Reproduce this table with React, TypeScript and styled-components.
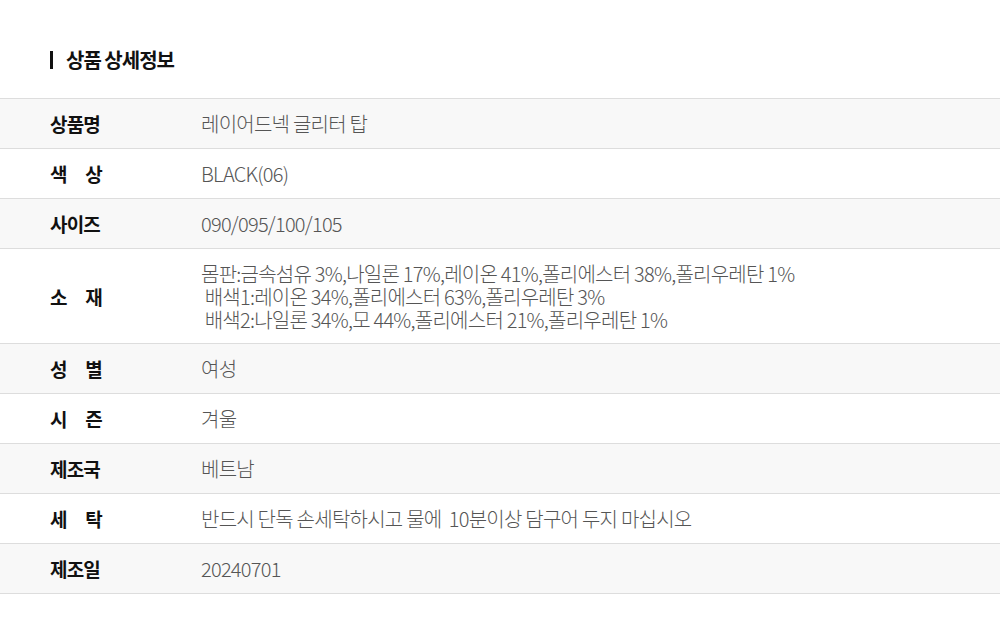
import styled, { createGlobalStyle } from "styled-components";

const GlobalStyle = createGlobalStyle`
    html, body {
        margin: 0;
        padding: 0;
        background: #ffffff;
    }
    body {
        font-family: "Noto Sans CJK KR", "Noto Sans", sans-serif;
        color: #222222;
    }
`;

const Wrap = styled.div`
    width: 1000px;
    padding-top: 48px;
`;

const Title = styled.h2`
    display: flex;
    align-items: center;
    gap: 13px;
    margin: 0 0 26px 50px;
    font-size: 20px;
    font-weight: 700;
    line-height: 24px;
    letter-spacing: -1px;
    color: #111111;
    &::before {
        content: "";
        width: 3px;
        height: 18px;
        background: #111111;
    }
`;

const Table = styled.div`
    border-top: 1px solid #dddddd;
`;

const Row = styled.div<{ $shade: boolean }>`
    display: grid;
    grid-template-columns: 201px 1fr;
    align-items: center;
    min-height: 49px;
    border-bottom: 1px solid #dddddd;
    background: ${({ $shade }) => ($shade ? "#f8f8f8" : "#ffffff")};
`;

const Label = styled.div<{ $spread: boolean }>`
    padding-left: 50px;
    font-size: 19px;
    font-weight: 700;
    letter-spacing: -0.8px;
    color: #111111;
    span {
        display: inline-block;
        width: ${({ $spread }) => ($spread ? "52px" : "auto")};
        text-align-last: ${({ $spread }) => ($spread ? "justify" : "auto")};
    }
`;

const Value = styled.div`
    padding: 12.5px 0;
    font-size: 20px;
    font-weight: 300;
    line-height: 23px;
    letter-spacing: -0.75px;
    color: #555555;
    white-space: pre-line;
`;

const rows = [
    { label: "상품명", value: "레이어드넥 글리터 탑" },
    { label: "색 상", value: "BLACK(06)" },
    { label: "사이즈", value: "090/095/100/105" },
    {
        label: "소 재",
        value:
            "몸판:금속섬유 3%,나일론 17%,레이온 41%,폴리에스터 38%,폴리우레탄 1%\n\u00a0배색1:레이온 34%,폴리에스터 63%,폴리우레탄 3%\n\u00a0배색2:나일론 34%,모 44%,폴리에스터 21%,폴리우레탄 1%",
    },
    { label: "성 별", value: "여성" },
    { label: "시 즌", value: "겨울" },
    { label: "제조국", value: "베트남" },
    { label: "세 탁", value: "반드시 단독 손세탁하시고 물에 \u00a010분이상 담구어 두지 마십시오" },
    { label: "제조일", value: "20240701" },
];

function App() {
    return (
        <>
            <GlobalStyle />
            <Wrap>
                <Title>상품 상세정보</Title>
                <Table>
                    {rows.map((row, i) => (
                        <Row key={row.label} $shade={i % 2 === 0}>
                            <Label $spread={row.label.includes(" ")}>
                                <span>{row.label}</span>
                            </Label>
                            <Value>{row.value}</Value>
                        </Row>
                    ))}
                </Table>
            </Wrap>
        </>
    );
}

export default App;
